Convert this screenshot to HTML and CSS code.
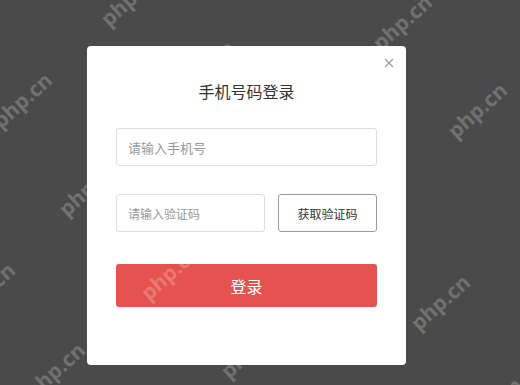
FILE: index.html
```html
<!DOCTYPE html>
<html lang="zh">
<head>
<meta charset="utf-8">
<link rel="stylesheet" href="styles.css">
</head>
<body>
<div class="overlay">
  <div class="modal">
    <span class="close">
      <svg width="10" height="10" viewBox="0 0 10 10"><path d="M1 1L9 9M9 1L1 9" stroke="#999" stroke-width="1.1" fill="none"/></svg>
    </span>
    <h2 class="title">手机号码登录</h2>
    <div class="field"><input class="input" placeholder="请输入手机号"></div>
    <div class="row">
      <input class="input code" placeholder="请输入验证码">
      <button class="getcode">获取验证码</button>
    </div>
    <button class="login">登录</button>
  </div>
</div>
<div class="wm">
  <span class="mark m1">php.cn</span>
  <span class="mark m2">php.cn</span>
  <span class="mark m3">php.cn</span>
  <span class="mark m4">php.cn</span>
  <span class="mark m5">php.cn</span>
  <span class="mark m6">php.cn</span>
  <span class="mark m7">php.cn</span>
  <span class="mark m8">php.cn</span>
  <span class="mark m9">php.cn</span>
  <span class="mark m10">php.cn</span>
  <span class="mark m11">php.cn</span>
  <span class="mark m12">php.cn</span>
</div>
</body>
</html>
```
FILE: styles.css
```css
* { box-sizing: border-box; }
html, body { margin: 0; padding: 0; }
body {
  width: 520px;
  height: 385px;
  overflow: hidden;
  background: #4a4a4a;
  font-family: "Noto Sans CJK SC", "Noto Sans", sans-serif;
  position: relative;
}
.overlay {
  padding: 46px 0 0 87px;
}
.modal {
  position: relative;
  width: 319px;
  height: 319px;
  background: #fff;
  border-radius: 4px;
  padding: 34px 29px 0 29px;
}
.close {
  position: absolute;
  right: 12px;
  top: 12px;
  width: 10px;
  height: 10px;
  display: flex;
}
.title {
  margin: 0;
  font-size: 16px;
  font-weight: normal;
  color: #333;
  text-align: center;
  line-height: 22px;
  height: 22px;
}
.field { margin-top: 26px; }
.input {
  display: block;
  width: 100%;
  height: 38px;
  border: 1px solid #ddd;
  border-radius: 3px;
  padding: 0 11px;
  font-family: inherit;
  font-size: 13px;
  color: #333;
  outline: none;
  background: #fff;
}
.input::placeholder { color: #999; }
.row {
  margin-top: 28px;
  display: flex;
  gap: 13px;
}
.code { width: 149px; flex: none; font-size: 12px; }
.getcode {
  flex: 1;
  height: 38px;
  border: 1px solid #9a9a9a;
  border-radius: 3px;
  background: #fff;
  font-family: inherit;
  font-size: 12px;
  color: #333;
  padding: 0;
}
.login {
  display: block;
  margin-top: 32px;
  width: 100%;
  height: 43px;
  border: none;
  border-radius: 3px;
  background: #e5534f;
  color: #fff;
  font-family: inherit;
  font-size: 16px;
  padding: 0;
}
.wm {
  position: absolute;
  inset: 0;
  overflow: hidden;
  pointer-events: none;
}
.mark {
  position: absolute;
  font-family: "Open Sans", "DejaVu Sans", sans-serif;
  font-weight: bold;
  font-size: 21px;
  color: rgba(255, 255, 255, 0.22);
  transform: translate(-50%, -50%) rotate(-42deg);
  white-space: nowrap;
}
.m1 { left: 130px; top: -2px; }
.m2 { left: 402px; top: 22px; }
.m3 { left: 22px; top: 100px; }
.m4 { left: 477px; top: 110px; }
.m5 { left: 88px; top: 188px; }
.m6 { left: 170px; top: 272px; }
.m7 { left: 440px; top: 302px; }
.m8 { left: 55px; top: 370px; }
.m9 { left: -15px; top: 290px; }
.m10 { left: 515px; top: 385px; }
.m11 { left: 250px; top: 350px; }
.m12 { left: 205px; top: 68px; }
```
